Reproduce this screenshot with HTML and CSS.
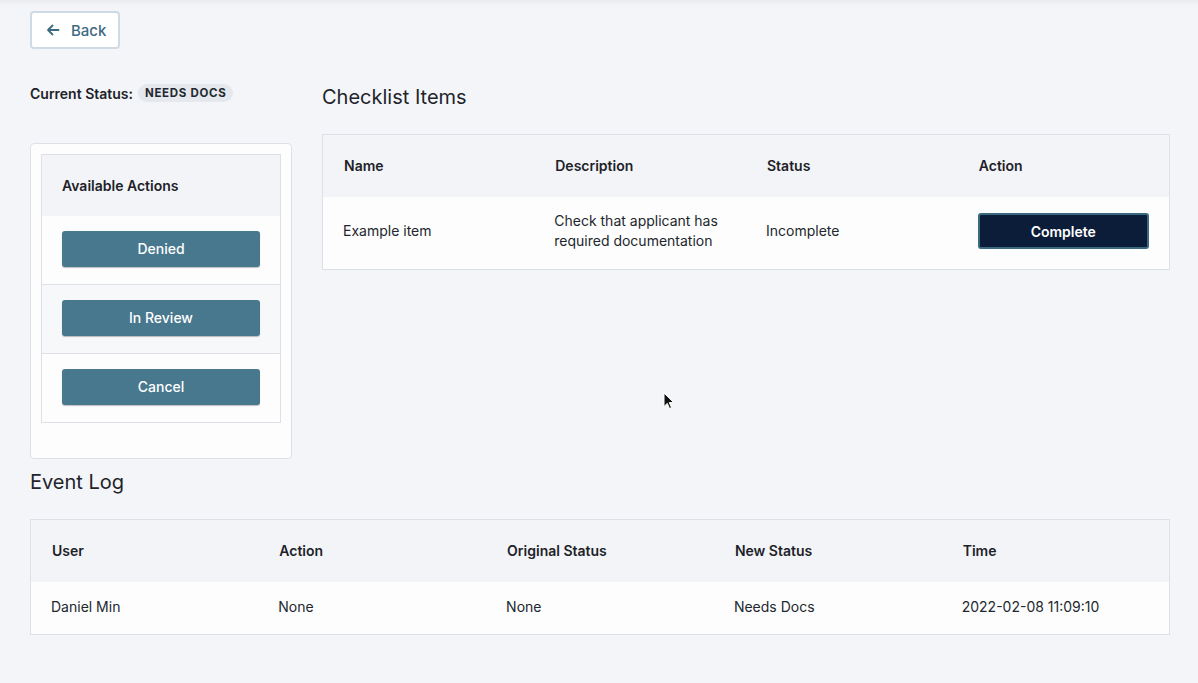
FILE: index.html
```html
<!DOCTYPE html>
<html lang="en">
<head>
<meta charset="utf-8">
<title>Application</title>
<link rel="stylesheet" href="styles.css">
</head>
<body>
<div class="topshade"></div>
<main class="page">
  <button class="back-btn" type="button">
    <svg class="back-icon" width="14" height="14" viewBox="0 0 14 14" aria-hidden="true">
      <path d="M12.5 7H2M6.5 2.5L2 7l4.5 4.5" fill="none" stroke="currentColor" stroke-width="1.8" stroke-linecap="round" stroke-linejoin="round"/>
    </svg>
    <span>Back</span>
  </button>

  <div class="layout">
    <aside class="side">
      <div class="status-line">
        <span class="status-label">Current Status:</span>
        <span class="badge">Needs Docs</span>
      </div>
      <div class="card">
        <div class="actions">
          <div class="actions-head">Available Actions</div>
          <div class="action-row"><button class="act-btn" type="button">Denied</button></div>
          <div class="action-row alt"><button class="act-btn" type="button">In Review</button></div>
          <div class="action-row last"><button class="act-btn" type="button">Cancel</button></div>
        </div>
      </div>
    </aside>

    <section class="content">
      <h2 class="heading">Checklist Items</h2>
      <table class="table checklist">
        <thead>
          <tr><th>Name</th><th>Description</th><th>Status</th><th>Action</th></tr>
        </thead>
        <tbody>
          <tr>
            <td>Example item</td>
            <td>Check that applicant has<br>required documentation</td>
            <td>Incomplete</td>
            <td><button class="complete-btn" type="button">Complete</button></td>
          </tr>
        </tbody>
      </table>
    </section>
  </div>

  <section class="events">
    <h2 class="heading">Event Log</h2>
    <table class="table eventlog">
      <thead>
        <tr><th>User</th><th>Action</th><th>Original Status</th><th>New Status</th><th>Time</th></tr>
      </thead>
      <tbody>
        <tr><td>Daniel Min</td><td>None</td><td>None</td><td>Needs Docs</td><td>2022-02-08 11:09:10</td></tr>
      </tbody>
    </table>
  </section>
</main>
<svg class="cursor" width="12" height="18" viewBox="0 0 12 18" aria-hidden="true">
  <path d="M1 1v13.5l3.3-3.1 2.2 5.1 2-0.9-2.2-5h4.4z" fill="#111" stroke="#fff" stroke-width="1"/>
</svg>
</body>
</html>
```

FILE: styles.css
```css
* { box-sizing: border-box; }

html, body {
  margin: 0;
  padding: 0;
  background: #f4f5f8;
  font-family: Inter, "Noto Sans", "Liberation Sans", sans-serif;
  color: #1d2229;
  font-size: 14px;
}

.topshade {
  position: absolute;
  left: 0;
  top: 0;
  right: 0;
  height: 6px;
  background: linear-gradient(#e9ebee, rgba(244,245,248,0));
}

.page {
  padding: 11px 28px 0 30px;
}

.back-btn {
  display: flex;
  align-items: center;
  gap: 11px;
  width: 90px;
  height: 38px;
  padding: 0 0 0 14px;
  background: #ffffff;
  border: 2px solid #cfdbe4;
  border-radius: 4px;
  color: #3d6a82;
  font-family: inherit;
  font-size: 15px;
  font-weight: 500;
}

.back-icon { display: block; }

.layout {
  display: grid;
  grid-template-columns: 262px 1fr;
  column-gap: 30px;
  margin-top: 27px;
}

.status-line {
  display: flex;
  align-items: center;
  gap: 5px;
  margin-top: 7px;
  height: 20px;
}

.status-label {
  font-weight: 600;
  font-size: 14px;
}

.badge {
  display: inline-block;
  padding: 0 7px;
  height: 18px;
  line-height: 18px;
  border-radius: 9px;
  background: #e5e8ed;
  font-size: 11.5px;
  font-weight: 700;
  letter-spacing: 0.06em;
  text-transform: uppercase;
  color: #232830;
}

.card {
  margin-top: 40px;
  background: #fdfdfd;
  border: 1px solid #dde1e7;
  border-radius: 4px;
  padding: 10px 10px 35px;
}

.actions {
  border: 1px solid #dde1e7;
}

.actions-head {
  height: 61px;
  line-height: 61px;
  padding: 0 20px;
  background: #f3f4f7;
  font-weight: 600;
  font-size: 14px;
}

.action-row {
  padding: 15px 20px 17px;
  border-bottom: 1px solid #dde1e7;
  background: #fdfdfd;
}
.action-row.alt { background: #f7f8fa; }
.action-row.last { border-bottom: 0; }

.act-btn {
  display: block;
  width: 100%;
  height: 36px;
  padding: 0 0 1px;
  background: #48788e;
  border: 0;
  border-radius: 3px;
  color: #ffffff;
  font-family: inherit;
  font-size: 14px;
  font-weight: 500;
  box-shadow: 0 1px 1px rgba(0,0,0,0.25);
}

.heading {
  margin: 0;
  font-size: 20px;
  font-weight: 400;
  line-height: 24px;
  color: #1f242b;
}

.content .heading { margin-top: 9px; }

.table {
  width: 100%;
  border-collapse: collapse;
  table-layout: fixed;
  border: 1px solid #dde1e7;
  background: #fdfdfd;
  margin-top: 25px;
}

.table th {
  height: 62px;
  text-align: left;
  font-weight: 600;
  font-size: 14px;
  padding: 0 21px;
  background: #f3f4f7;
}

.table td {
  font-size: 14px;
  line-height: 20px;
  color: #22272e;
}

.checklist td { height: 73px; padding: 0 20px 3px; }
.eventlog td { height: 53px; padding: 0 20px 2px; }

.complete-btn {
  display: block;
  width: 171px;
  height: 36px;
  background: #0b1d39;
  border: 2px solid #3b6a80;
  border-radius: 3px;
  color: #ffffff;
  font-family: inherit;
  font-size: 14px;
  font-weight: 600;
}

.events .heading { margin-top: 11px; }

.cursor {
  position: absolute;
  left: 663px;
  top: 392px;
}
```
